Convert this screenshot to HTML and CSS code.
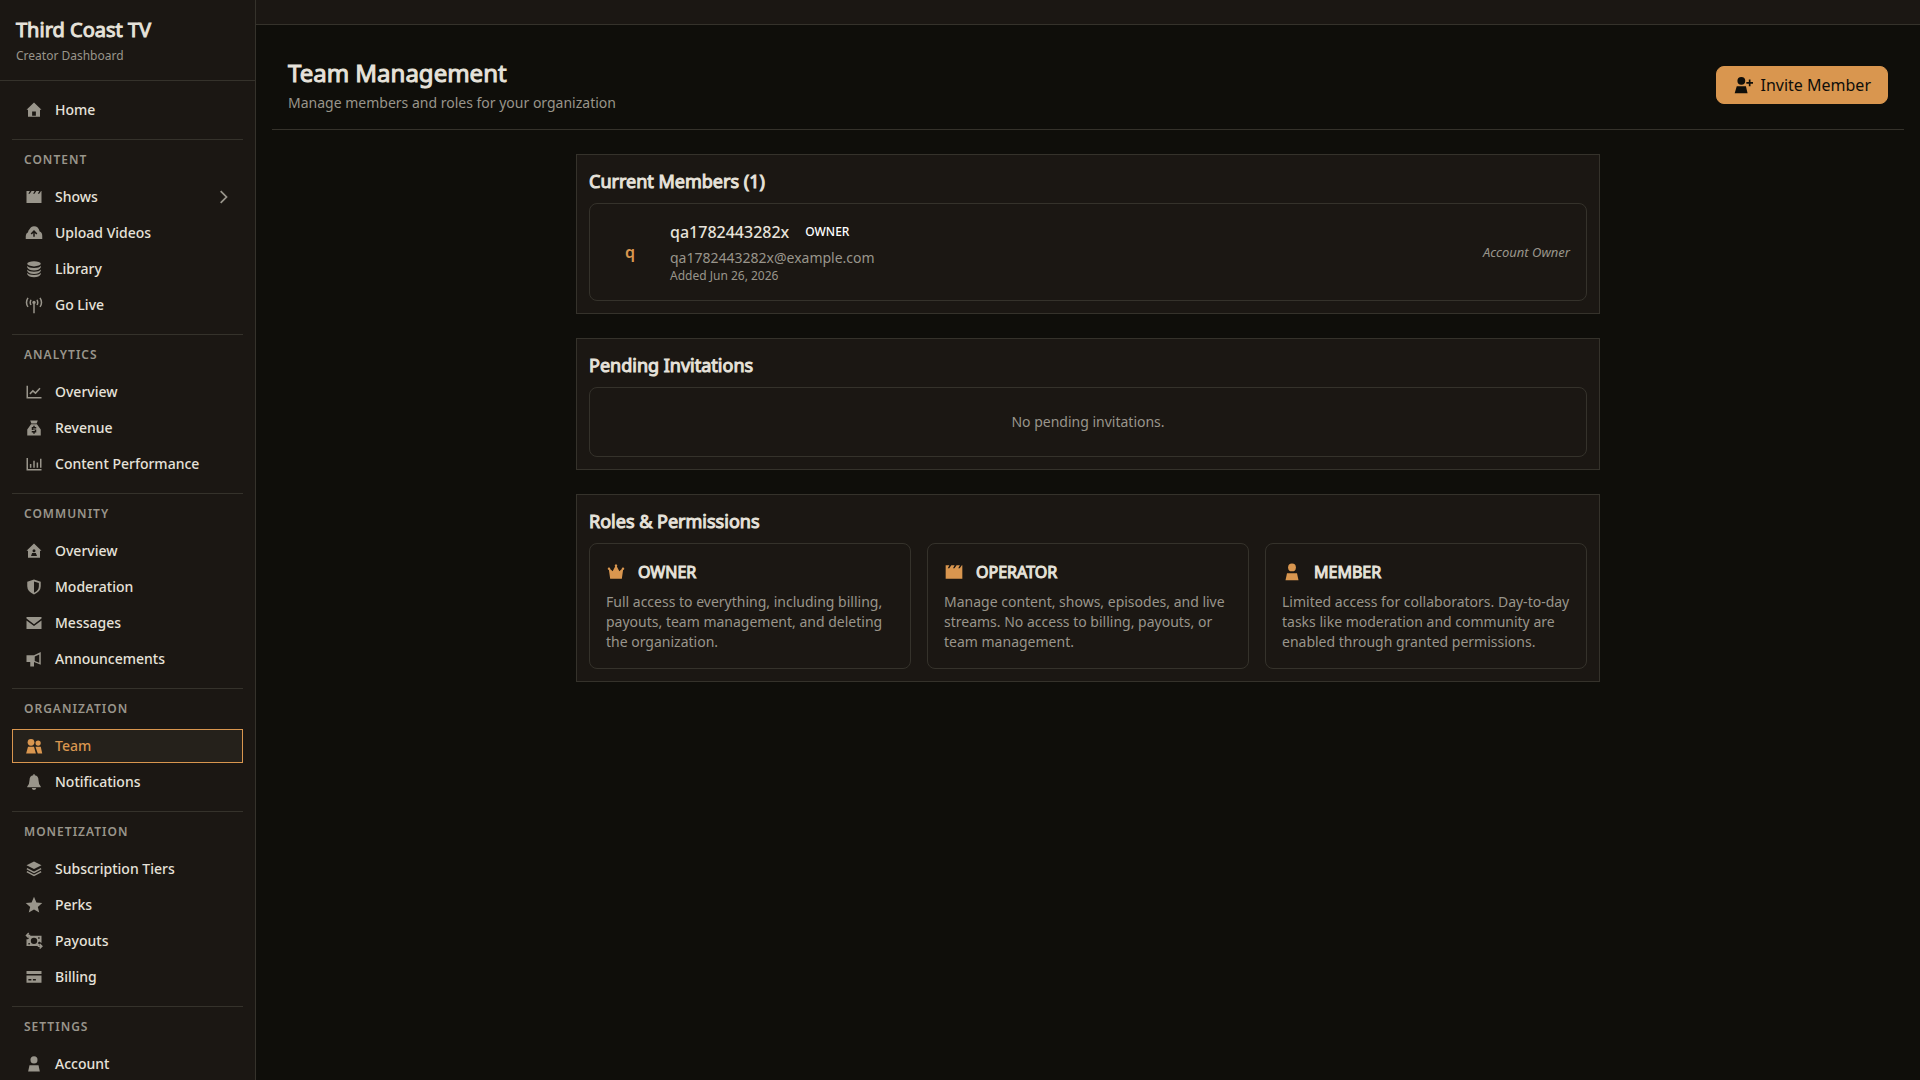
FILE: index.html
```html
<!DOCTYPE html>
<html lang="en">
<head>
  <meta charset="UTF-8">
  <meta name="viewport" content="width=device-width, initial-scale=1.0">
  <title>Team Management - Third Coast TV</title>
  <link rel="stylesheet" href="styles.css">
</head>
<body>

  <!-- Icon sprite -->
  <svg class="sprite" aria-hidden="true">
    <symbol id="i-home" viewBox="0 0 24 24"><path fill-rule="evenodd" d="M12 2 22 11.500h-2V21H4v-9.500H2zM9.500 14v5.500h5V14z"/></symbol>
    <symbol id="i-clapper" viewBox="0 0 24 24"><path d="M2 4h4.500L4.500 7.500h1.800L8.800 4h4L10.800 7.500h1.800L15.100 4h4L17.100 7.500h1.800L21.400 4h.6v16H2z"/></symbol>
    <symbol id="i-upload" viewBox="0 0 24 24"><path fill-rule="evenodd" d="M6 7q2-4 6-4 6 0 7.500 7 3.500 1 3.500 6v4H1v-4q0-3.500 3-5 .3-2.500 2-4zM12 8l-4.500 4.500L9 14l2-2v5h2v-5l2 2 1.500-1.500z"/></symbol>
    <symbol id="i-database" viewBox="0 0 24 24"><ellipse cx="12" cy="5" rx="9" ry="3.500"/><path d="M3 7.500q2 3 9 3t9-3v2.500q-2 4-9 4t-9-4zM3 12.500q2 3 9 3t9-3v2q-2 4-9 4t-9-4zM3 17q2 3 9 3t9-3v2q-2 4-9 4t-9-4z"/></symbol>
    <symbol id="i-antenna" viewBox="0 0 24 24"><path d="M11 10h2v13h-2z"/><circle cx="12" cy="8.500" r="2.200"/><path class="line" d="M8 5q-2 3.500 0 7M16 5q2 3.500 0 7M4 2.500q-4 6 0 12M20 2.500q4 6 0 12"/></symbol>
    <symbol id="i-line-chart" viewBox="0 0 24 24"><path class="line" d="M3 3.500V19.500h19M6.500 14.500l4-4 3.500 3 6-6.500"/></symbol>
    <symbol id="i-bag" viewBox="0 0 24 24"><path fill-rule="evenodd" d="M7 2h10l-1.500 4h-7zM8 7h8l5 7v8H3v-8zM11 9v1.500H9v4h4V16H9v2h2v1.500h2V18h2v-4h-4v-1.500h4v-2h-2V9z"/></symbol>
    <symbol id="i-bar-chart" viewBox="0 0 24 24"><path class="line" d="M3 4v15.500h19M7.500 17v-5M12 17V7.500M16.500 17v-7M21 17V5"/></symbol>
    <symbol id="i-community" viewBox="0 0 24 24"><path fill-rule="evenodd" d="M12 2l10 9.500h-2V21H4v-9.500H2zM12 9.500a2 2 0 1 0 0 4 2 2 0 1 0 0-4zM8 18.500h8l-1.500-4h-5z"/></symbol>
    <symbol id="i-shield" viewBox="0 0 24 24"><path fill-rule="evenodd" d="M12 2l9 3v6q0 7-9 11-9-4-9-11V5zM12 4.500v15q6.500-3 6.500-8.500V6.500z"/></symbol>
    <symbol id="i-mail" viewBox="0 0 24 24"><path d="M2 4h20v2l-10 7.500L2 6zM2 8.500l10 7.500 10-7.500V20H2z"/></symbol>
    <symbol id="i-megaphone" viewBox="0 0 24 24"><path fill-rule="evenodd" d="M2 7h10l9-4.500v17L12 16v6H7v-6H2zM13 8.500v6l6 2.500V6z"/></symbol>
    <symbol id="i-team" viewBox="0 0 24 24"><circle cx="8" cy="7" r="4.500"/><circle cx="17.500" cy="8" r="3.500"/><path d="M4 13h8l2.500 9H1.500zM14 13h7l2 9h-6z"/></symbol>
    <symbol id="i-bell" viewBox="0 0 24 24"><path d="M11 1.500h2v1.500q5 1 5 6.500 0 5 3 8.500v1H3v-1q3-3.500 3-8.500Q6 4 11 3zM9 20h6q-.5 2.500-3 2.500T9 20z"/></symbol>
    <symbol id="i-layers" viewBox="0 0 24 24"><path d="M12 2l10 5-10 5L2 7z"/><path class="line" d="M2.500 11.500 12 16.500l9.500-5M2.500 15.500l9.500 5 9.500-5"/></symbol>
    <symbol id="i-star" viewBox="0 0 24 24"><path d="M12 1l3.200 7.500 7.800.7-5.900 5.300 1.900 7.500-7-4-7 4 1.900-7.500L1 9.200l7.800-.7z"/></symbol>
    <symbol id="i-payouts" viewBox="0 0 24 24"><path fill-rule="evenodd" d="M5 5h17v9.500l-3-2-2 2 2 2v2H2V9.500h2l1.500-1.500zM12 7.500a4 4 0 1 0 0 8.500 4 4 0 1 0 0-8.500zM17.500 7v2h2V7zM4.500 14.500v2h2v-2z"/><path class="line" d="M5 1.500 2 4.500l3 3M2 4.500h5M19.500 16l3 3-3 3M22 19h-5"/></symbol>
    <symbol id="i-card" viewBox="0 0 24 24"><path fill-rule="evenodd" d="M2 4h20v4H2zM2 10h20v9.500H2zM4.500 14.500v2h4v-2zM10.500 14.500v2h4v-2z"/></symbol>
    <symbol id="i-person" viewBox="0 0 24 24"><circle cx="12" cy="6.500" r="4.700"/><path d="M6 13.500h12l1.800 8.500H4.200z"/></symbol>
    <symbol id="i-person-add" viewBox="0 0 24 24"><circle cx="10" cy="7" r="4.700"/><path d="M4.500 13.500h11l2 8.500H2zM19 5.500h2V8.500h3v2h-3v3h-2v-3h-3v-2h3z"/></symbol>
    <symbol id="i-crown" viewBox="0 0 24 24"><path d="M5 20 3.500 9.500a1.500 1.500 0 1 1 1.500-1L8 11l3-5.500a1.500 1.500 0 1 1 2 0L16 11l3-2.500a1.500 1.500 0 1 1 1.500 1L19 20z"/></symbol>
    <symbol id="i-chevron" viewBox="0 0 24 24"><path class="line thick" d="M8 2l10 10L8 22"/></symbol>
  </svg>

  <div class="layout">
    <aside class="sidebar">
      <div class="brand">
        <h2>Third Coast TV</h2>
        <p>Creator Dashboard</p>
      </div>

      <nav class="nav">
        <div class="nav-section">
          <a class="nav-item" href="#"><svg class="icon"><use href="#i-home"/></svg>Home</a>
        </div>

        <div class="nav-section">
          <h3>Content</h3>
          <a class="nav-item" href="#"><svg class="icon"><use href="#i-clapper"/></svg>Shows<svg class="icon chevron"><use href="#i-chevron"/></svg></a>
          <a class="nav-item" href="#"><svg class="icon"><use href="#i-upload"/></svg>Upload Videos</a>
          <a class="nav-item" href="#"><svg class="icon"><use href="#i-database"/></svg>Library</a>
          <a class="nav-item" href="#"><svg class="icon"><use href="#i-antenna"/></svg>Go Live</a>
        </div>

        <div class="nav-section">
          <h3>Analytics</h3>
          <a class="nav-item" href="#"><svg class="icon"><use href="#i-line-chart"/></svg>Overview</a>
          <a class="nav-item" href="#"><svg class="icon"><use href="#i-bag"/></svg>Revenue</a>
          <a class="nav-item" href="#"><svg class="icon"><use href="#i-bar-chart"/></svg>Content Performance</a>
        </div>

        <div class="nav-section">
          <h3>Community</h3>
          <a class="nav-item" href="#"><svg class="icon"><use href="#i-community"/></svg>Overview</a>
          <a class="nav-item" href="#"><svg class="icon"><use href="#i-shield"/></svg>Moderation</a>
          <a class="nav-item" href="#"><svg class="icon"><use href="#i-mail"/></svg>Messages</a>
          <a class="nav-item" href="#"><svg class="icon"><use href="#i-megaphone"/></svg>Announcements</a>
        </div>

        <div class="nav-section">
          <h3>Organization</h3>
          <a class="nav-item active" href="#" aria-current="page"><svg class="icon"><use href="#i-team"/></svg>Team</a>
          <a class="nav-item" href="#"><svg class="icon"><use href="#i-bell"/></svg>Notifications</a>
        </div>

        <div class="nav-section">
          <h3>Monetization</h3>
          <a class="nav-item" href="#"><svg class="icon"><use href="#i-layers"/></svg>Subscription Tiers</a>
          <a class="nav-item" href="#"><svg class="icon"><use href="#i-star"/></svg>Perks</a>
          <a class="nav-item" href="#"><svg class="icon"><use href="#i-payouts"/></svg>Payouts</a>
          <a class="nav-item" href="#"><svg class="icon"><use href="#i-card"/></svg>Billing</a>
        </div>

        <div class="nav-section">
          <h3>Settings</h3>
          <a class="nav-item" href="#"><svg class="icon"><use href="#i-person"/></svg>Account</a>
        </div>
      </nav>
    </aside>

    <div class="content">
      <div class="topbar"></div>

      <main class="main">
        <header class="page-header">
          <div>
            <h1>Team Management</h1>
            <p>Manage members and roles for your organization</p>
          </div>
          <button type="button" class="btn-invite"><svg class="icon"><use href="#i-person-add"/></svg>Invite Member</button>
        </header>

        <div class="panels">
          <!-- Members -->
          <section class="panel">
            <h2>Current Members (1)</h2>
            <div class="card member">
              <div class="avatar">q</div>
              <div class="member-info">
                <div class="member-name">qa1782443282x <span class="badge">OWNER</span></div>
                <p class="member-email">qa1782443282x@example.com</p>
                <p class="member-added">Added Jun 26, 2026</p>
              </div>
              <span class="member-note">Account Owner</span>
            </div>
          </section>

          <!-- Invitations -->
          <section class="panel">
            <h2>Pending Invitations</h2>
            <div class="card empty">No pending invitations.</div>
          </section>

          <!-- Roles -->
          <section class="panel">
            <h2>Roles &amp; Permissions</h2>
            <div class="roles">
              <div class="card role">
                <h3><svg class="icon"><use href="#i-crown"/></svg>OWNER</h3>
                <p>Full access to everything, including billing, payouts, team management, and deleting the organization.</p>
              </div>
              <div class="card role">
                <h3><svg class="icon"><use href="#i-clapper"/></svg>OPERATOR</h3>
                <p>Manage content, shows, episodes, and live streams. No access to billing, payouts, or team management.</p>
              </div>
              <div class="card role">
                <h3><svg class="icon"><use href="#i-person"/></svg>MEMBER</h3>
                <p>Limited access for collaborators. Day-to-day tasks like moderation and community are enabled through granted permissions.</p>
              </div>
            </div>
          </section>
        </div>
      </main>
    </div>
  </div>

</body>
</html>
```
FILE: styles.css
```css
* {
  margin: 0;
  padding: 0;
  box-sizing: border-box;
}

:root {
  --bg: #0f0e0a;
  --surface: #1b1713;
  --border: #35322b;
  --text: #e6e2da;
  --muted: #99958b;
  --accent: #d9964f;
}

body {
  font-family: "Noto Sans", sans-serif;
  font-size: 14px;
  line-height: 20px;
  background: var(--bg);
  color: var(--text);
}

/* Headings */
h1,
h2,
.role h3 {
  font-weight: 400;
  -webkit-text-stroke: 1px currentColor;
}

.sprite {
  display: none;
}

.icon {
  width: 18px;
  height: 18px;
  flex-shrink: 0;
  fill: currentColor;
}

.line {
  fill: none;
  stroke: currentColor;
  stroke-width: 2;
}

.thick {
  stroke-width: 3;
}

.layout {
  display: flex;
  height: 100vh;
}

/* Sidebar */
.sidebar {
  width: 256px;
  flex-shrink: 0;
  background: var(--surface);
  border-right: 1px solid var(--border);
  overflow-y: auto;
  scrollbar-width: none;
}

.brand {
  padding: 16px;
  border-bottom: 1px solid var(--border);
}

.brand h2 {
  font-size: 20px;
  line-height: 28px;
}

.brand p {
  margin-top: 4px;
  font-size: 12px;
  line-height: 16px;
  color: var(--muted);
}

.nav {
  padding: 12px;
}

.nav-section {
  display: flex;
  flex-direction: column;
  gap: 2px;
}

.nav-section + .nav-section {
  margin-top: 12px;
  border-top: 1px solid var(--border);
}

.nav-section h3 {
  padding: 10px 12px 8px;
  font-size: 12px;
  line-height: 20px;
  font-weight: 600;
  letter-spacing: 1px;
  text-transform: uppercase;
  color: var(--muted);
}

.nav-item {
  display: flex;
  align-items: center;
  gap: 12px;
  height: 34px;
  padding: 0 12px;
  border: 1px solid transparent;
  font-weight: 500;
  color: var(--text);
  text-decoration: none;
}

.nav-item .icon {
  color: var(--muted);
}

.nav-item .chevron {
  width: 14px;
  height: 14px;
  margin-left: auto;
}

.nav-item:hover,
.nav-item.active {
  background: #25211b;
}

.nav-item.active {
  border-color: var(--accent);
}

.nav-item.active,
.nav-item.active .icon {
  color: var(--accent);
}

/* Content */
.content {
  flex: 1;
  min-width: 0;
  overflow-y: auto;
}

.topbar {
  height: 25px;
  background: var(--surface);
  border-bottom: 1px solid var(--border);
}

.main {
  padding: 16px;
}

.page-header {
  display: flex;
  align-items: center;
  justify-content: space-between;
  padding: 16px;
  border-bottom: 1px solid var(--border);
}

.page-header h1 {
  font-size: 24px;
  line-height: 32px;
}

.page-header p {
  margin-top: 4px;
  color: var(--muted);
}

.btn-invite {
  display: flex;
  align-items: center;
  gap: 8px;
  padding: 6px 16px;
  border: 1px solid var(--accent);
  border-radius: 8px;
  background: var(--accent);
  color: #0f0e0a;
  font: inherit;
  font-size: 16px;
  line-height: 24px;
  cursor: pointer;
}

.btn-invite .icon {
  width: 20px;
  height: 20px;
}

/* Panels */
.panels {
  display: flex;
  flex-direction: column;
  gap: 24px;
  max-width: 1024px;
  margin: 24px auto 0;
}

.panel {
  padding: 12px;
  background: var(--surface);
  border: 1px solid var(--border);
}

.panel h2 {
  margin-bottom: 8px;
  font-size: 18px;
  line-height: 28px;
}

.card {
  padding: 16px;
  border: 1px solid var(--border);
  border-radius: 8px;
}

.member {
  display: flex;
  align-items: center;
  gap: 16px;
}

.avatar {
  width: 48px;
  font-size: 16px;
  font-weight: 600;
  text-align: center;
  color: var(--accent);
}

.member-info {
  flex: 1;
}

.member-name {
  display: flex;
  align-items: center;
  gap: 8px;
  margin-bottom: 4px;
  font-size: 16px;
  line-height: 24px;
  font-weight: 500;
}

.badge {
  padding: 0 8px;
  font-size: 12px;
  line-height: 16px;
  color: #fff;
}

.member-email {
  color: var(--muted);
}

.member-added,
.member-note {
  font-size: 12px;
  line-height: 16px;
  color: var(--muted);
}

.member-note {
  font-size: 13px;
  font-style: italic;
}

.empty {
  padding: 24px;
  text-align: center;
  color: var(--muted);
}

.roles {
  display: grid;
  grid-template-columns: repeat(3, 1fr);
  gap: 16px;
}

.role h3 {
  display: flex;
  align-items: center;
  gap: 12px;
  margin-bottom: 8px;
  font-size: 16px;
  line-height: 24px;
}

.role .icon {
  width: 20px;
  height: 20px;
  color: var(--accent);
}

.role p {
  color: var(--muted);
}
```
